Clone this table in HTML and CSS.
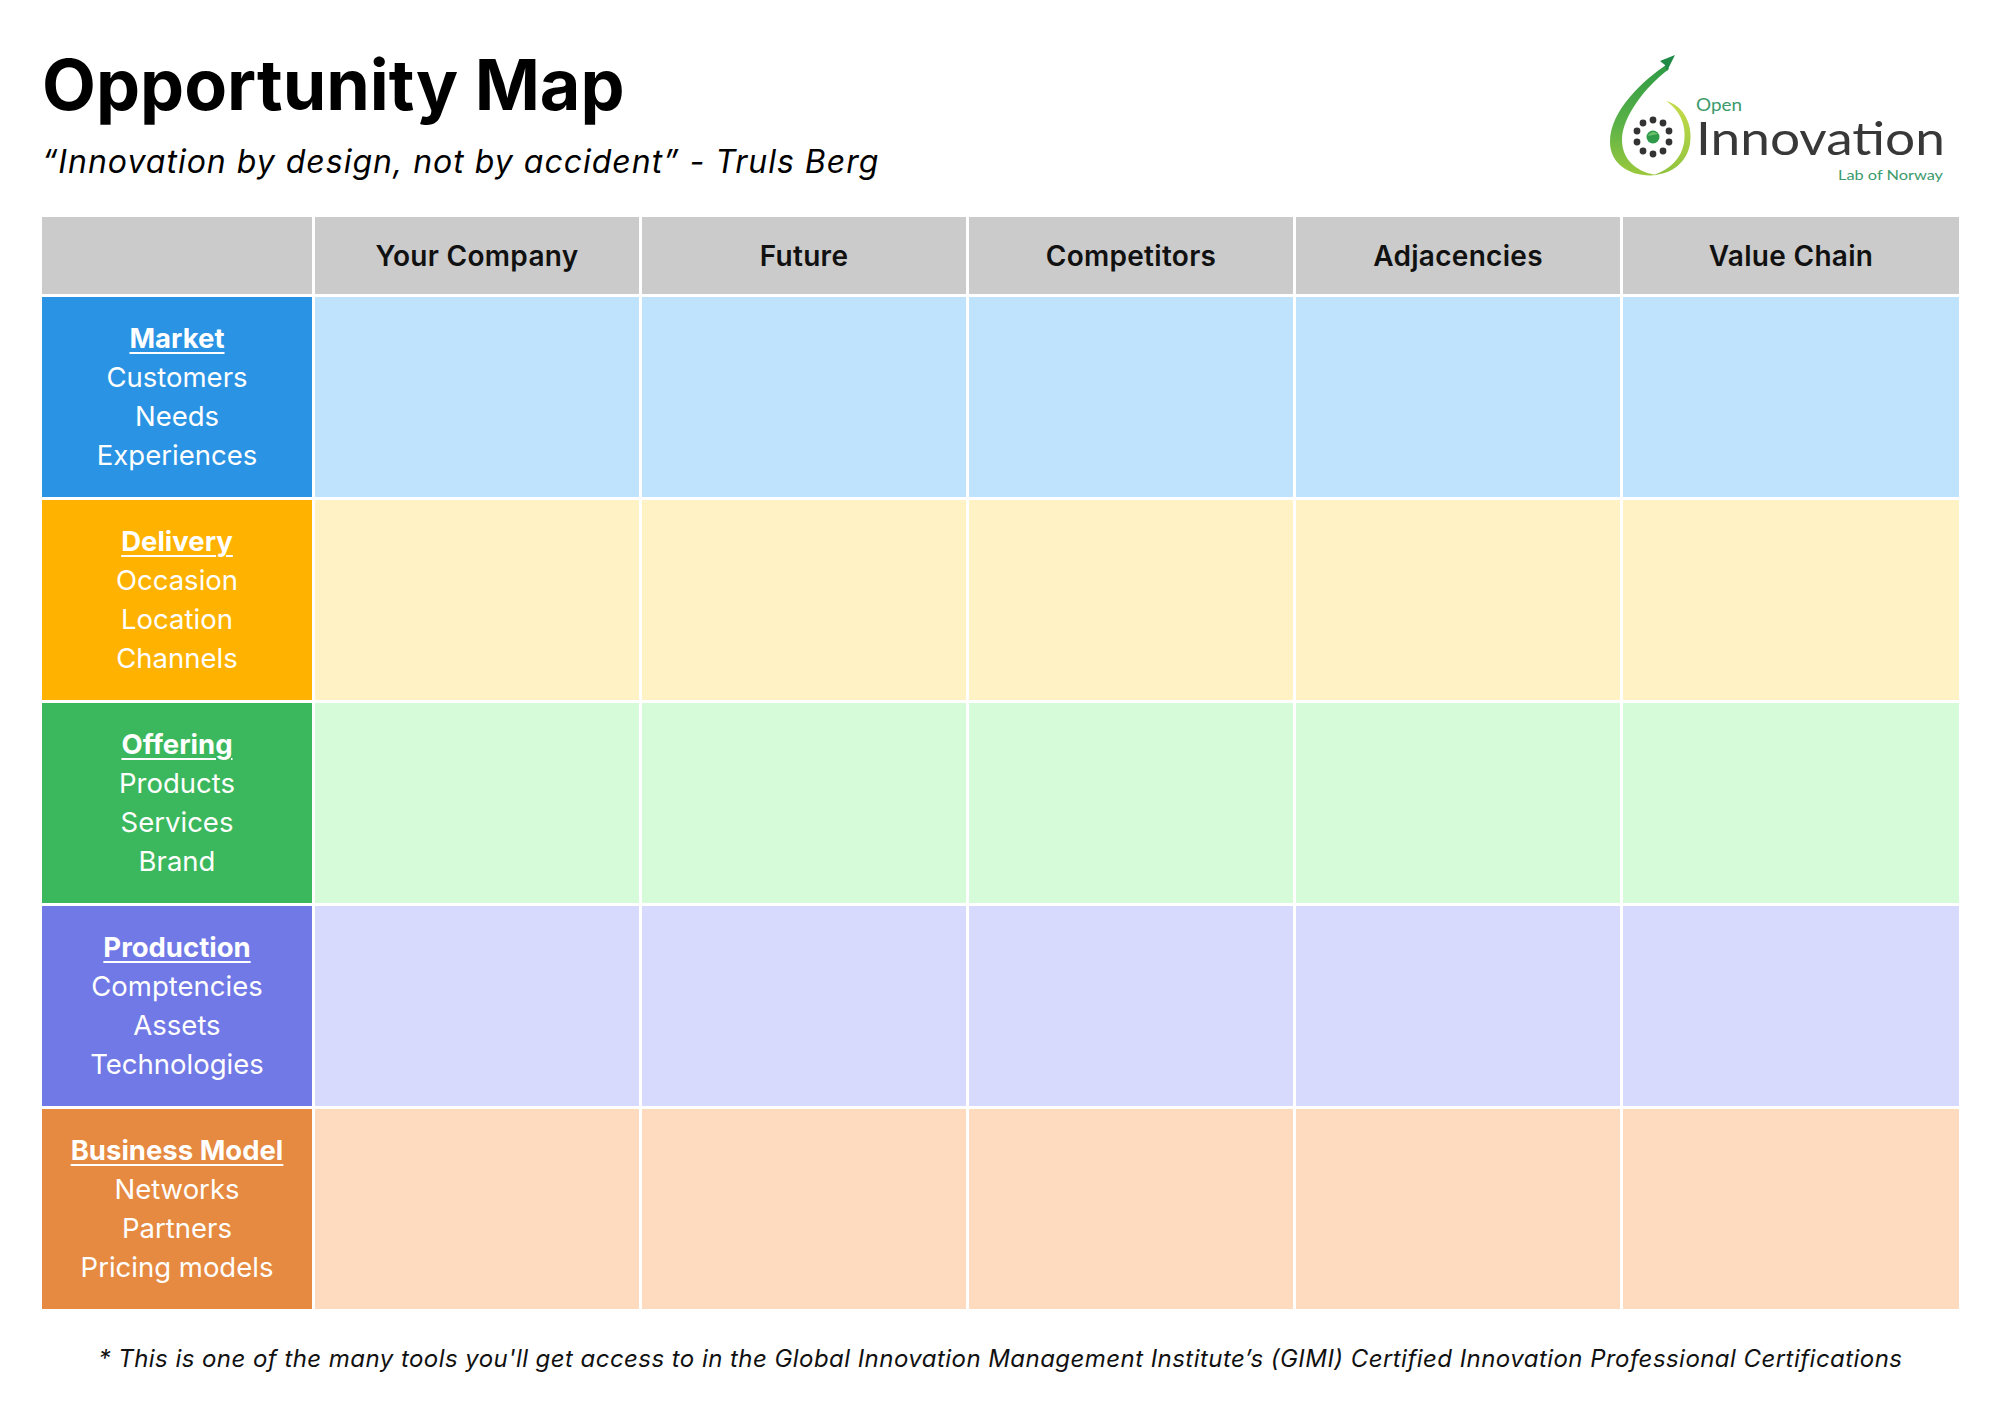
FILE: index.html
```html
<!DOCTYPE html>
<html lang="en">
<head>
<meta charset="utf-8">
<title>Opportunity Map</title>
<link rel="stylesheet" href="styles.css">
</head>
<body>
<div class="page">
  <header class="top">
    <div class="titles">
      <h1 class="title">Opportunity Map</h1>
      <p class="quote">“Innovation by design, not by accident” - Truls Berg</p>
    </div>
    <svg class="logo" width="360" height="150" viewBox="0 0 360 150" xmlns="http://www.w3.org/2000/svg">
      <defs>
        <linearGradient id="sw" x1="0" y1="0" x2="0" y2="1">
          <stop offset="0" stop-color="#2e9a45"/>
          <stop offset="0.55" stop-color="#5cb347"/>
          <stop offset="1" stop-color="#9cc93c"/>
        </linearGradient>
        <linearGradient id="sw2" x1="0" y1="0" x2="0" y2="1">
          <stop offset="0" stop-color="#c6dc4a"/>
          <stop offset="1" stop-color="#8fc33e"/>
        </linearGradient>
      </defs>
      <path d="M66 25 C44 40 10 70 10 102 C10 125 32 138 57 135 C40 133 22 122 22 100 C22 77 45 47 69 29 Z" fill="url(#sw)"/>
      <path d="M66 61 C85 66 93 86 90 104 C87 122 72 134 54 135 C70 129 81 119 84 103 C87 86 80 70 66 61 Z" fill="url(#sw2)"/>
      <path d="M75 15 L60 21 L65 25 L67 31 Z" fill="#1f8a45"/>
      <g fill="#333">
        <circle cx="53" cy="80" r="3.4"/>
        <circle cx="63" cy="83" r="3.4"/>
        <circle cx="69" cy="91" r="3.4"/>
        <circle cx="69" cy="102" r="3.4"/>
        <circle cx="63" cy="111" r="3.4"/>
        <circle cx="53" cy="114" r="3.4"/>
        <circle cx="43" cy="111" r="3.4"/>
        <circle cx="37" cy="102" r="3.4"/>
        <circle cx="37" cy="91" r="3.4"/>
        <circle cx="43" cy="83" r="3.4"/>
      </g>
      <circle cx="53" cy="97" r="6.5" fill="#2e9a4a"/>
      <path d="M48 96 A6 6 0 0 1 58 94 Z" fill="#6cc06a"/>
      <text x="96" y="71" class="lg-open" textLength="46" lengthAdjust="spacingAndGlyphs">Open</text>
      <text x="96" y="115" class="lg-inno" textLength="249" lengthAdjust="spacingAndGlyphs">Innovation</text>
      <text x="238" y="140" class="lg-lab" textLength="105" lengthAdjust="spacingAndGlyphs">Lab of Norway</text>
    </svg>
  </header>

  <section class="map">
    <div class="hcell corner"></div>
    <div class="hcell">Your Company</div>
    <div class="hcell">Future</div>
    <div class="hcell">Competitors</div>
    <div class="hcell">Adjacencies</div>
    <div class="hcell">Value Chain</div>

    <div class="label market"><strong>Market</strong><span>Customers</span><span>Needs</span><span>Experiences</span></div>
    <div class="cell market-l"></div><div class="cell market-l"></div><div class="cell market-l"></div><div class="cell market-l"></div><div class="cell market-l"></div>

    <div class="label delivery"><strong>Delivery</strong><span>Occasion</span><span>Location</span><span>Channels</span></div>
    <div class="cell delivery-l"></div><div class="cell delivery-l"></div><div class="cell delivery-l"></div><div class="cell delivery-l"></div><div class="cell delivery-l"></div>

    <div class="label offering"><strong>Offering</strong><span>Products</span><span>Services</span><span>Brand</span></div>
    <div class="cell offering-l"></div><div class="cell offering-l"></div><div class="cell offering-l"></div><div class="cell offering-l"></div><div class="cell offering-l"></div>

    <div class="label production"><strong>Production</strong><span>Comptencies</span><span>Assets</span><span>Technologies</span></div>
    <div class="cell production-l"></div><div class="cell production-l"></div><div class="cell production-l"></div><div class="cell production-l"></div><div class="cell production-l"></div>

    <div class="label business"><strong>Business Model</strong><span>Networks</span><span>Partners</span><span>Pricing models</span></div>
    <div class="cell business-l"></div><div class="cell business-l"></div><div class="cell business-l"></div><div class="cell business-l"></div><div class="cell business-l"></div>
  </section>

  <p class="footnote">* This is one of the many tools you'll get access to in the Global Innovation Management Institute’s (GIMI) Certified Innovation Professional Certifications</p>
</div>
</body>
</html>
```

FILE: styles.css
```css
html, body {
  margin: 0;
  padding: 0;
  background: #ffffff;
}

body {
  font-family: "Inter", "Noto Sans", "Liberation Sans", sans-serif;
  color: #000;
}

.page {
  width: 2000px;
  height: 1414px;
  box-sizing: border-box;
  padding: 40px 41px 0 42px;
}

.top {
  display: flex;
  justify-content: space-between;
  align-items: flex-start;
  height: 150px;
}

.titles {
  display: flex;
  flex-direction: column;
}

.title {
  margin: 10px 0 0 0;
  font-size: 70px;
  line-height: 1;
  font-weight: 700;
  letter-spacing: 0;
}

.quote {
  margin: 26px 0 0 0;
  font-size: 32px;
  line-height: 1;
  font-style: italic;
  font-weight: 400;
  letter-spacing: 1px;
}

.logo {
  display: block;
  margin-right: -1px;
}

.lg-open {
  font-family: "Lato", "Open Sans", sans-serif;
  font-size: 17px;
  fill: #3b9a6b;
}

.lg-inno {
  font-family: "Lato", "Open Sans", sans-serif;
  font-weight: 400;
  font-size: 46px;
  fill: #383838;
}

.lg-lab {
  font-family: "Lato", "Open Sans", sans-serif;
  font-size: 14px;
  fill: #3b9a6b;
}

.map {
  margin-top: 27px;
  display: grid;
  grid-template-columns: 270px repeat(4, 324px) 1fr;
  grid-template-rows: 77px repeat(5, 200px);
  gap: 3px;
}

.hcell {
  background: #cbcbcb;
  display: flex;
  align-items: center;
  justify-content: center;
  font-size: 28px;
  font-weight: 600;
  letter-spacing: 0.3px;
  color: #111;
}

.label {
  display: flex;
  flex-direction: column;
  align-items: center;
  justify-content: center;
  color: #fff;
  font-size: 27.5px;
  line-height: 39px;
  text-align: center;
}

.label strong {
  font-weight: 700;
  text-decoration: underline;
  text-decoration-thickness: 2px;
  text-underline-offset: 4px;
}

.market { background: #2a93e3; }
.delivery { background: #ffb300; }
.offering { background: #3bb85d; }
.production { background: #7179e6; }
.business { background: #e68a41; }

.market-l { background: #bfe3fc; }
.delivery-l { background: #fff3c5; }
.offering-l { background: #d5fbd9; }
.production-l { background: #d7d9fd; }
.business-l { background: #fedabf; }

.footnote {
  margin: 38px 0 0 0;
  text-align: center;
  font-size: 24px;
  line-height: 1;
  font-style: italic;
  letter-spacing: 0.45px;
  color: #111;
}
```
